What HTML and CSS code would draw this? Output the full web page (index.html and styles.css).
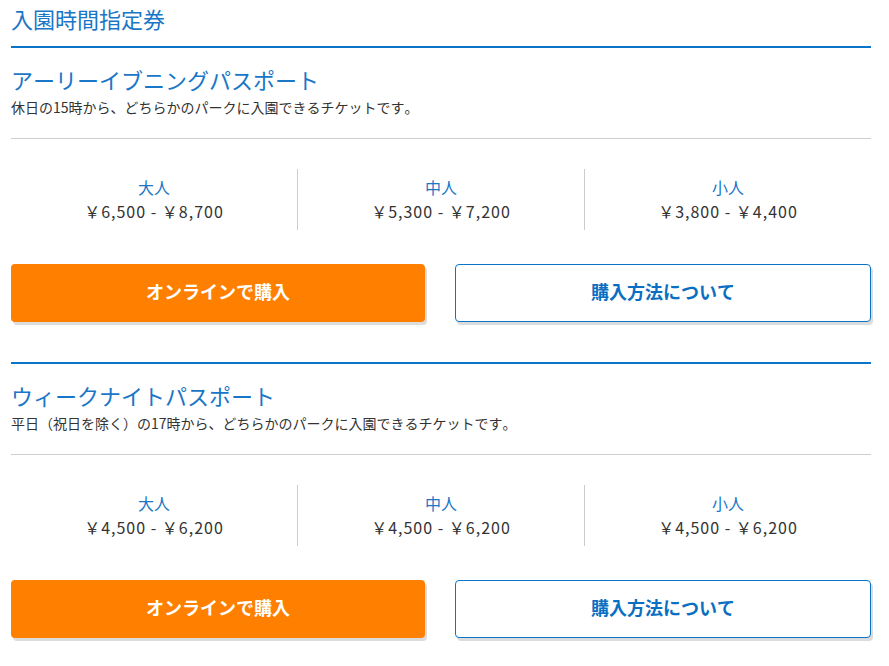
FILE: index.html
```html
<!DOCTYPE html>
<html lang="ja">
<head>
<meta charset="utf-8">
<title>入園時間指定券</title>
<link rel="stylesheet" href="styles.css">
</head>
<body>
<div class="page">
  <h1 class="page-title">入園時間指定券</h1>

  <section class="ticket">
    <h2 class="ticket-name">アーリーイブニングパスポート</h2>
    <p class="ticket-desc">休日の15時から、どちらかのパークに入園できるチケットです。</p>
    <div class="prices">
      <div class="price-col">
        <div class="price-label">大人</div>
        <div class="price-value">￥6,500 - ￥8,700</div>
      </div>
      <div class="price-col">
        <div class="price-label">中人</div>
        <div class="price-value">￥5,300 - ￥7,200</div>
      </div>
      <div class="price-col">
        <div class="price-label">小人</div>
        <div class="price-value">￥3,800 - ￥4,400</div>
      </div>
    </div>
    <div class="actions">
      <a class="btn btn-buy" href="#">オンラインで購入</a>
      <a class="btn btn-info" href="#">購入方法について</a>
    </div>
  </section>

  <section class="ticket">
    <h2 class="ticket-name">ウィークナイトパスポート</h2>
    <p class="ticket-desc">平日（祝日を除く）の17時から、どちらかのパークに入園できるチケットです。</p>
    <div class="prices">
      <div class="price-col">
        <div class="price-label">大人</div>
        <div class="price-value">￥4,500 - ￥6,200</div>
      </div>
      <div class="price-col">
        <div class="price-label">中人</div>
        <div class="price-value">￥4,500 - ￥6,200</div>
      </div>
      <div class="price-col">
        <div class="price-label">小人</div>
        <div class="price-value">￥4,500 - ￥6,200</div>
      </div>
    </div>
    <div class="actions">
      <a class="btn btn-buy" href="#">オンラインで購入</a>
      <a class="btn btn-info" href="#">購入方法について</a>
    </div>
  </section>
</div>
</body>
</html>
```

FILE: styles.css
```css
* { box-sizing: border-box; }
html, body { margin: 0; padding: 0; background: #fff; }
body {
  font-family: "Noto Sans CJK JP", "Noto Sans", "DejaVu Sans", sans-serif;
  color: #333;
  font-kerning: none;
  font-feature-settings: "kern" 0, "palt" 0;
}
.page {
  width: 860px;
  margin-left: 11px;
}
.page-title {
  margin: 0;
  padding-top: 3px;
  height: 46px;
  font-size: 22px;
  line-height: 30px;
  font-weight: normal;
  color: #1a76c6;
}
.ticket {
  border-top: 2px solid #0a74c9;
  padding-bottom: 40px;
}
.ticket-name {
  margin: 16px 0 0;
  font-size: 22px;
  line-height: 30px;
  font-weight: normal;
  color: #1a76c6;
}
.ticket-desc {
  margin: 3px 0 0;
  font-size: 14px;
  line-height: 20px;
  color: #333;
  padding-bottom: 21px;
  border-bottom: 1px solid #cfcfcf;
}
.prices {
  display: flex;
  margin-top: 30px;
  height: 61px;
}
.price-col {
  flex: 1;
  display: flex;
  flex-direction: column;
  align-items: center;
  padding-top: 8px;
  gap: 2px;
}
.price-col + .price-col {
  border-left: 1px solid #cccccc;
}
.price-label {
  font-size: 16px;
  line-height: 20px;
  color: #1a76c6;
}
.price-value {
  font-size: 16px;
  line-height: 24px;
  letter-spacing: 1px;
  color: #333;
}
.actions {
  display: flex;
  gap: 30px;
  margin-top: 34px;
}
.btn {
  flex: 1;
  height: 58px;
  display: flex;
  align-items: center;
  justify-content: center;
  padding-bottom: 4px;
  border-radius: 4px;
  font-size: 18px;
  font-weight: bold;
  text-decoration: none;
  box-shadow: 2px 3px 0 #dcdcdc;
}
.btn-buy {
  background: #ff7f00;
  color: #fff;
}
.btn-info {
  background: #fff;
  color: #0a6fc2;
  border: 1px solid #0a74c9;
}
```
